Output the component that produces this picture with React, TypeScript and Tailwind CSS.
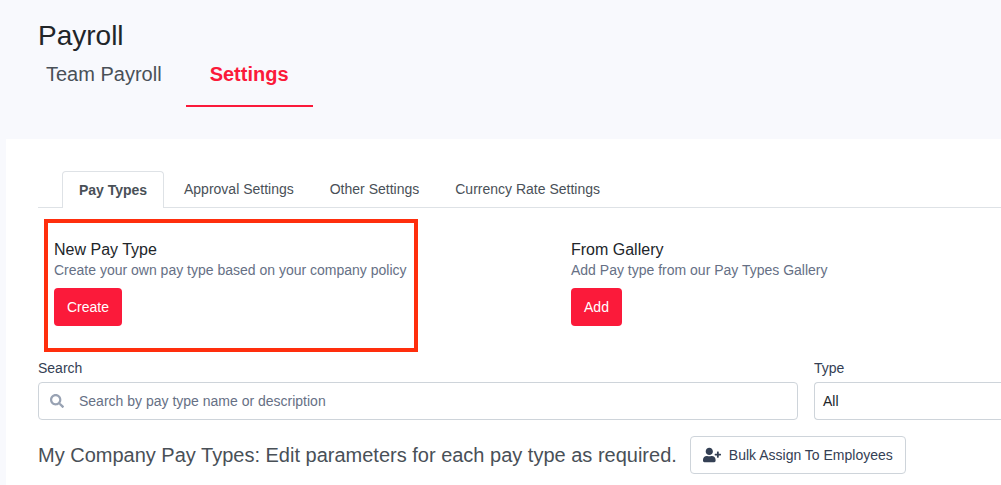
import { FaSearch, FaUserPlus } from "react-icons/fa";

const SUB_TABS = ["Approval Settings", "Other Settings", "Currency Rate Settings"];

export default function App() {
  return (
    <div className="h-[485px] w-[1001px] overflow-hidden bg-[#f8f9fd] font-['Liberation_Sans',sans-serif]">
      {/* Page header */}
      <div className="h-[139px] pl-[38px] pt-[19px]">
        <h1 className="text-[28px] leading-[33px] text-[#212529]">Payroll</h1>
        <div className="flex">
          <div className="pl-2 pr-6 pt-[10px] text-[20px] leading-[24px] text-[#495057]">Team Payroll</div>
          <div className="h-[55px] w-[127px] border-b-2 border-[#fb1a3a] pt-[10px] text-center text-[20px] font-bold leading-[24px] text-[#fb1a3a]">
            Settings
          </div>
        </div>
      </div>

      {/* Main panel */}
      <div className="relative ml-[6px] h-[346px] bg-white pl-[32px] pt-[32px]">
        <div className="flex h-[37px] border-b border-[#dee2e6] pl-6 text-sm">
          <div className="mr-[2px] h-[37px] w-[102px] rounded-t border border-b-0 border-[#dee2e6] bg-white pt-[10px] text-center font-bold leading-[17px] text-[#495057]">
            Pay Types
          </div>
          {SUB_TABS.map((tab) => (
            <div key={tab} className="px-[18px] pt-[10px] leading-[17px] text-[#495057]">
              {tab}
            </div>
          ))}
        </div>

        <div className="flex pt-[32px]">
          <div className="w-[533px] pl-4">
            <div className="text-base leading-[19px] text-[#212529]">New Pay Type</div>
            <div className="mt-[3px] text-sm leading-[17px] text-[#667085]">
              Create your own pay type based on your company policy
            </div>
            <button className="mt-[9px] h-[38px] w-[68px] rounded bg-[#fb1a3a] text-sm font-medium text-white">
              Create
            </button>
          </div>
          <div>
            <div className="text-base leading-[19px] text-[#212529]">From Gallery</div>
            <div className="mt-[3px] text-sm leading-[17px] text-[#667085]">
              Add Pay type from our Pay Types Gallery
            </div>
            <button className="mt-[9px] h-[38px] w-[51px] rounded bg-[#fb1a3a] text-sm font-medium text-white">
              Add
            </button>
          </div>
        </div>

        <div className="mt-[34px] flex gap-4">
          <div className="w-[760px] shrink-0">
            <div className="text-sm leading-[17px] text-[#344054]">Search</div>
            <div className="mt-[5px] flex h-[38px] items-center rounded border border-[#ced4da] bg-white pl-[11px]">
              <FaSearch size={14} className="text-[#98a2b3]" />
              <span className="ml-[15px] text-sm text-[#667085]">Search by pay type name or description</span>
            </div>
          </div>
          <div className="grow">
            <div className="text-sm leading-[17px] text-[#344054]">Type</div>
            <div className="mt-[5px] flex h-[38px] items-center rounded-l border border-r-0 border-[#ced4da] bg-white pl-2 text-sm text-[#212529]">
              All
            </div>
          </div>
        </div>

        <div className="mt-4 flex items-center">
          <span className="text-[20px] leading-[38px] text-[#495057]">
            My Company Pay Types: Edit parameters for each pay type as required.
          </span>
          <button className="ml-[13px] flex h-[38px] w-[216px] items-center justify-center gap-2 rounded border border-[#ced4da] bg-white text-sm text-[#344054]">
            <FaUserPlus size={18} className="text-[#344054]" />
            Bulk Assign To Employees
          </button>
        </div>

        {/* Red annotation box */}
        <div className="absolute left-[38px] top-[80px] h-[133px] w-[374px] border-4 border-[#ff2e0d]" />
      </div>
    </div>
  );
}
